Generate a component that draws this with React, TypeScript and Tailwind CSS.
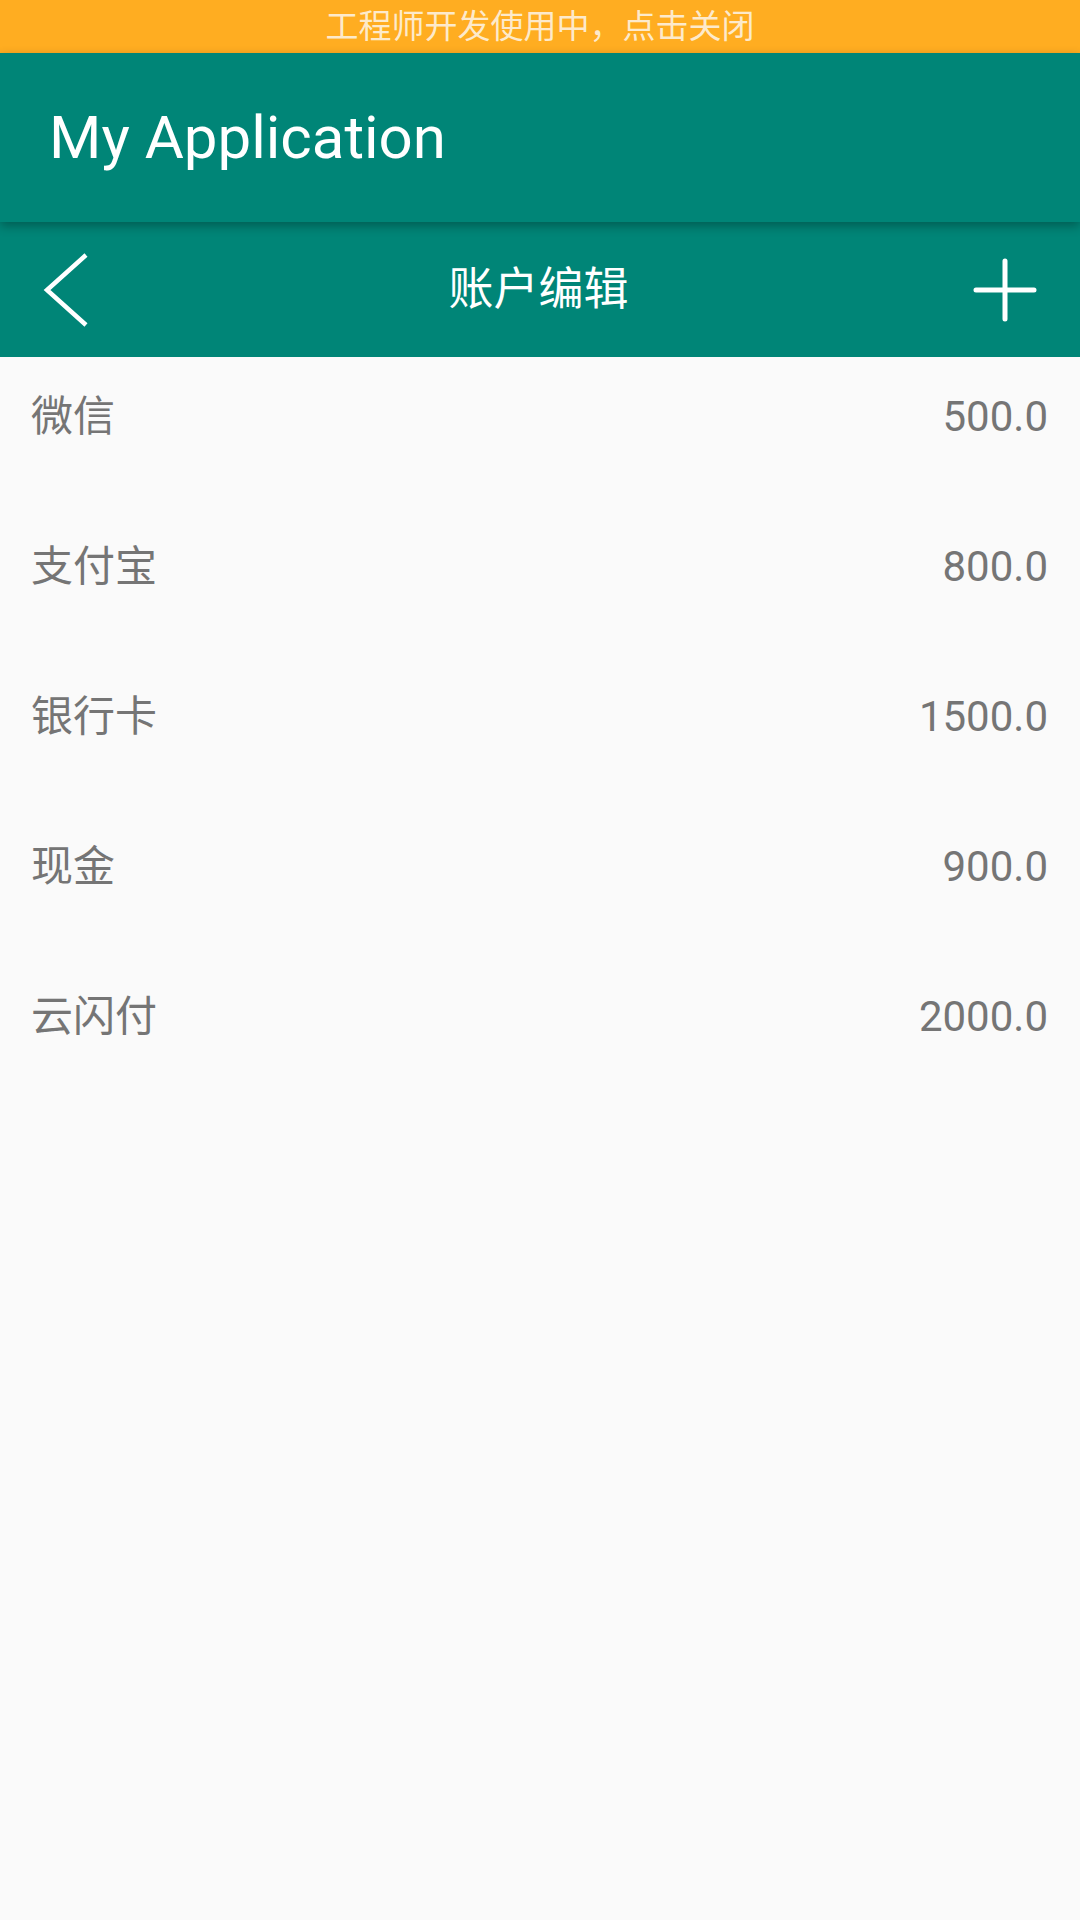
const accounts = [
  { name: "微信", amount: "500.0" },
  { name: "支付宝", amount: "800.0" },
  { name: "银行卡", amount: "1500.0" },
  { name: "现金", amount: "900.0" },
  { name: "云闪付", amount: "2000.0" },
];

const font = { fontFamily: "Roboto, 'Noto Sans CJK SC', sans-serif" };

function BackIcon() {
  return (
    <svg width="50" height="76" viewBox="0 0 50 76" fill="none">
      <path d="M46 3 L7 38 L46 73" stroke="white" strokeWidth="4.5" strokeLinecap="butt" strokeLinejoin="miter" />
    </svg>
  );
}

function PlusIcon() {
  return (
    <svg width="64" height="64" viewBox="0 0 64 64" fill="none">
      <path d="M32 3 V61 M3 32 H61" stroke="white" strokeWidth="5" strokeLinecap="round" />
    </svg>
  );
}

export default function App() {
  return (
    <div className="flex h-[1920px] w-[1080px] flex-col bg-[#fafafa]" style={font}>
      {/* dev banner */}
      <div className="flex h-[53px] items-center justify-center bg-[#ffad21] text-[33px] leading-none text-[#fdeacb]">
        工程师开发使用中，点击关闭
      </div>

      {/* app bar */}
      <div className="relative z-10 flex h-[169px] items-center bg-[#008577] pl-[49px] shadow-[0_4px_10px_rgba(0,0,0,0.3)]">
        <span className="text-[60px] leading-none text-white">My Application</span>
      </div>

      {/* page toolbar */}
      <div className="flex h-[135px] items-center justify-between bg-[#008577] px-[40px]">
        <div className="flex w-[64px] items-center">
          <BackIcon />
        </div>
        <span className="text-[45px] leading-none text-white">账户编辑</span>
        <div className="flex w-[64px] items-center justify-end mr-[3px]">
          <PlusIcon />
        </div>
      </div>

      {/* account list */}
      <div className="flex flex-col">
        {accounts.map((a) => (
          <div key={a.name} className="flex h-[150px] items-start justify-between pl-[31px] pr-[32px] pt-[35px]">
            <span className="text-[42px] leading-[49px] text-[#757575]">{a.name}</span>
            <span className="text-[42px] leading-[49px] text-[#757575]">{a.amount}</span>
          </div>
        ))}
      </div>
    </div>
  );
}
